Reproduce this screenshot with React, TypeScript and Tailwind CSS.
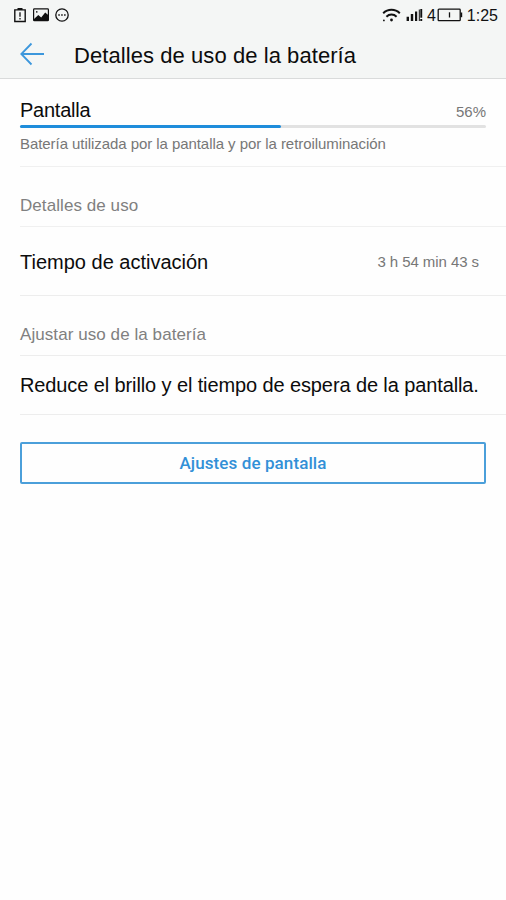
const StatusBar = () => (
  <div className="flex h-[30px] items-center justify-between pl-3.5 pr-2">
    <div className="flex items-center gap-[7px]">
      <svg width="12" height="15" viewBox="0 0 12 15" fill="none">
        <path d="M.8 1.9h10.4v11.6H.8z" stroke="#111" strokeWidth="1.4" />
        <path d="M3.5 0h5v2h-5z" fill="#111" />
        <path d="M6 4.2v4.6M6 9.9v1.5" stroke="#111" strokeWidth="1.3" />
      </svg>
      <svg width="16" height="14" viewBox="0 0 16 14">
        <rect x=".6" y=".9" width="14.8" height="11.8" rx=".8" fill="none" stroke="#111" strokeWidth="1.2" />
        <path d="M1 12.6V11l4.3-4 2.9 2.6 4-5L15.2 7v5.6z" fill="#111" />
        <circle cx="3.8" cy="3.9" r=".8" fill="#111" />
      </svg>
      <svg className="-ml-px" width="14" height="14" viewBox="0 0 14 14">
        <circle cx="7" cy="7" r="6.2" fill="none" stroke="#111" strokeWidth="1.3" />
        <path d="M3.3 6.3h1.5v1.5H3.3zM6.2 6.3h1.5v1.5H6.2zM9.1 6.3h1.5v1.5H9.1z" fill="#111" />
      </svg>
    </div>
    <div className="flex items-center text-base text-[#111]">
      <svg width="19" height="14" viewBox="0 0 19 14" fill="none" stroke="#111">
        <path d="M1.2 5.2C5.8.6 13.200.6 17.800 5.2" strokeWidth="2" />
        <path d="M4.400 8.700c2.900-2.800 7.300-2.800 10.200 0" strokeWidth="2" />
        <circle cx="9.500" cy="12" r="1.400" fill="#111" stroke="none" />
        <circle cx="1.900" cy="12.400" r=".9" fill="#111" stroke="none" />
      </svg>
      <svg className="ml-[5px]" width="17" height="14" viewBox="0 0 17 14" fill="#111">
        <path d="M.6 8.800h2.400v4.200H.6zM4.800 6h2.400v7H4.800zM9 3.500h2.200V13H9zM12.800 1.500h1v11.500h-1zM14.300 1h1.900v8.700h-1.900zM14.300 11h1.900v2h-1.900z" />
      </svg>
      <span className="ml-1 pt-0.5 leading-5">4</span>
      <svg className="ml-px" width="26" height="14" viewBox="0 0 26 14">
        <rect x="1.200" y="1.200" width="22" height="11.500" rx=".8" fill="none" stroke="#111" strokeWidth="1.3" />
        <path d="M23.500 4.500h1.700v4.700h-1.700z" fill="#111" />
        <path d="M12.500 4.300v5.200" stroke="#111" strokeWidth="1.300" />
      </svg>
      <span className="ml-1 pt-0.5 leading-5">1:25</span>
    </div>
  </div>
);

const App = () => {
  return (
    <main className="min-h-screen bg-[#fefefe] font-['Liberation_Sans',Arial,sans-serif] text-[#0c0c0c]">
      <header className="h-[79px] border-b border-[#d9dbdb] bg-[#f4f6f5]">
        <StatusBar />
        <div className="flex h-12 items-center pl-5">
          <svg width="25" height="24" viewBox="0 0 25 24" fill="none" stroke="#3c97dc" strokeWidth="1.8">
            <path d="M11.5 1.5 1.3 12l10.200 10.500M1.300 12H24" />
          </svg>
          <h1 className="ml-[29px] pt-[3px] text-[22px] leading-[26px] tracking-[0.07px]">
            Detalles de uso de la batería
          </h1>
        </div>
      </header>

      <div className="pl-5">
        <section className="h-[88px] border-b border-[#f0f0f0] pr-5 pt-[17px]">
          <div className="flex h-[29px] items-start justify-between">
            <h2 className="text-xl leading-7 tracking-[-0.25px]">Pantalla</h2>
            <span className="pt-[5px] text-[15px] leading-[22px] text-[#777]">56%</span>
          </div>
          <div className="h-[3px] rounded-full bg-[#e2e2e2]">
            <div className="h-[3px] w-[56%] rounded-full bg-[#1e8ddb]" />
          </div>
          <p className="mt-1.5 whitespace-nowrap text-[15px] leading-5 tracking-[-0.06px] text-[#777]">
            Batería utilizada por la pantalla y por la retroiluminación
          </p>
        </section>

        <h3 className="flex h-[60px] items-end border-b border-[#f0f0f0] pb-2 text-[17px] tracking-[0.07px] text-[#808080]">
          Detalles de uso
        </h3>
        <div className="flex h-[69px] items-center justify-between border-b border-[#ededed] pr-[27px] pt-0.5">
          <span className="text-xl">Tiempo de activación</span>
          <span className="pt-px text-[15px] tracking-[-0.07px] text-[#777]">3 h 54 min 43 s</span>
        </div>

        <h3 className="flex h-[60px] items-end border-b border-[#ededed] pb-2 text-[17px] tracking-[0.07px] text-[#808080]">
          Ajustar uso de la batería
        </h3>
        <p className="flex h-[59px] items-center whitespace-nowrap border-b border-[#ededed] text-xl tracking-[-0.11px]">
          Reduce el brillo y el tiempo de espera de la pantalla.
        </p>

        <div className="pr-5 pt-[27px]">
          <button className="h-[42px] w-full rounded-[2px] border-2 border-[#4b9fda] pt-0.5 font-[Roboto,sans-serif] text-[17px] font-medium tracking-[0.1px] text-[#3290d7]">
            Ajustes de pantalla
          </button>
        </div>
      </div>
    </main>
  );
};

export default App;
